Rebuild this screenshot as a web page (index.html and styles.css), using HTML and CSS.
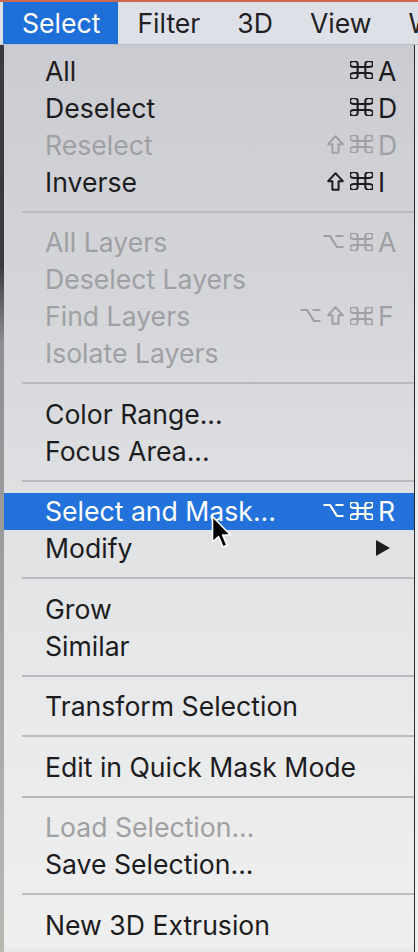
FILE: index.html
```html
<!DOCTYPE html>
<html>
<head>
<meta charset="utf-8">
<link rel="stylesheet" href="styles.css">
</head>
<body>
<svg class="defs" width="0" height="0">
  <symbol id="i-cmd" viewBox="3 3 18 18" preserveAspectRatio="none">
    <path d="M18 3a3 3 0 0 0-3 3v12a3 3 0 0 0 3 3 3 3 0 0 0 3-3 3 3 0 0 0-3-3H6a3 3 0 0 0-3 3 3 3 0 0 0 3 3 3 3 0 0 0 3-3V6a3 3 0 0 0-3-3 3 3 0 0 0-3 3 3 3 0 0 0 3 3h12a3 3 0 0 0 3-3 3 3 0 0 0-3-3z" fill="none" stroke="currentColor" stroke-width="2.1" vector-effect="non-scaling-stroke"/>
  </symbol>
  <symbol id="i-shift" viewBox="0 0 17 19">
    <path d="M8.5 1.2 L15.8 9.2 L11.6 9.2 L11.6 17.8 L5.4 17.8 L5.4 9.2 L1.2 9.2 Z" fill="none" stroke="currentColor" stroke-width="2" stroke-linejoin="round"/>
  </symbol>
  <symbol id="i-opt" viewBox="0 0 21 15">
    <path d="M0.5 2 H7 L14 13 H20.5 M12.5 2 H20.5" fill="none" stroke="currentColor" stroke-width="2.2"/>
  </symbol>
</svg>
<div class="topline"></div>
<div class="menubar">
  <div class="mb-item active">Select</div>
  <div class="mb-item">Filter</div>
  <div class="mb-item">3D</div>
  <div class="mb-item">View</div>
  <div class="mb-item">Window</div>
</div>
<div class="stage">
  <div class="edge-left"></div>
  <div class="menu">
    <div class="row"><span class="label">All</span><span class="mods"><svg class="cmd"><use href="#i-cmd"/></svg></span><span class="key">A</span></div>
    <div class="row"><span class="label">Deselect</span><span class="mods"><svg class="cmd"><use href="#i-cmd"/></svg></span><span class="key">D</span></div>
    <div class="row disabled"><span class="label">Reselect</span><span class="mods"><svg class="shift"><use href="#i-shift"/></svg><svg class="cmd"><use href="#i-cmd"/></svg></span><span class="key">D</span></div>
    <div class="row"><span class="label">Inverse</span><span class="mods"><svg class="shift"><use href="#i-shift"/></svg><svg class="cmd"><use href="#i-cmd"/></svg></span><span class="key">I</span></div>
    <div class="sep"></div>
    <div class="row disabled"><span class="label">All Layers</span><span class="mods"><svg class="opt"><use href="#i-opt"/></svg><svg class="cmd"><use href="#i-cmd"/></svg></span><span class="key">A</span></div>
    <div class="row disabled"><span class="label">Deselect Layers</span></div>
    <div class="row disabled"><span class="label">Find Layers</span><span class="mods"><svg class="opt"><use href="#i-opt"/></svg><svg class="shift"><use href="#i-shift"/></svg><svg class="cmd"><use href="#i-cmd"/></svg></span><span class="key">F</span></div>
    <div class="row disabled"><span class="label">Isolate Layers</span></div>
    <div class="sep"></div>
    <div class="row"><span class="label">Color Range...</span></div>
    <div class="row"><span class="label">Focus Area...</span></div>
    <div class="sep"></div>
    <div class="row hl"><span class="label">Select and Mask...</span><span class="mods"><svg class="opt"><use href="#i-opt"/></svg><svg class="cmd"><use href="#i-cmd"/></svg></span><span class="key">R</span></div>
    <div class="row"><span class="label">Modify</span><svg class="sub" width="14" height="16" viewBox="0 0 14 16"><path d="M0 0 L14 8 L0 16 Z" fill="#1e1e1e"/></svg></div>
    <div class="sep"></div>
    <div class="row"><span class="label">Grow</span></div>
    <div class="row"><span class="label">Similar</span></div>
    <div class="sep"></div>
    <div class="row"><span class="label">Transform Selection</span></div>
    <div class="sep"></div>
    <div class="row"><span class="label">Edit in Quick Mask Mode</span></div>
    <div class="sep"></div>
    <div class="row disabled"><span class="label">Load Selection...</span></div>
    <div class="row"><span class="label">Save Selection...</span></div>
    <div class="sep"></div>
    <div class="row"><span class="label">New 3D Extrusion</span></div>
    <svg class="cursor" width="24" height="36" viewBox="0 0 24 36"><path d="M1.5 1.5 L1.5 27 L7.5 21.5 L12 32 L16 30.2 L11.6 20 L19.5 20 Z" fill="#000" stroke="#fff" stroke-width="1.6" stroke-linejoin="round"/></svg>
  </div>
  <div class="edge-right"></div>
</div>
</body>
</html>
```
FILE: styles.css
```css
html, body {
  margin: 0;
  padding: 0;
}
body {
  width: 418px;
  height: 952px;
  overflow: hidden;
  background: #e9e9e9;
  font-family: Inter, "Noto Sans", sans-serif;
  -webkit-font-smoothing: antialiased;
}
.defs {
  display: block;
  width: 0;
  height: 0;
  overflow: hidden;
}
.topline {
  height: 2px;
  background: #c9694f;
}
.menubar {
  height: 42px;
  display: flex;
  align-items: stretch;
  background: #dee0e8;
  border-bottom: 1px solid #b9bbc2;
  padding-left: 3px;
  overflow: hidden;
  white-space: nowrap;
}
.mb-item {
  display: flex;
  align-items: center;
  padding: 0 18px 0 19px;
  font-size: 26.6px;
  color: #1f2024;
}
.mb-item.active {
  background: #1f6fd8;
  color: #ffffff;
}
.stage {
  display: flex;
  height: 907px;
}
.edge-left {
  width: 4px;
  background: linear-gradient(#3a3a3c 0, #3a3a3c 220px, #8d8f92 300px, #b9b8b3 100%);
}
.edge-right {
  width: 4px;
  background: linear-gradient(#e4e5e8, #f0f0f0);
  border-left: 1px solid #2a2a2c;
  box-sizing: border-box;
}
.menu {
  position: relative;
  flex: 1;
  padding-top: 7px;
  background: linear-gradient(#cbccd1 0, #d3d5d9 250px, #dee0e2 450px, #e8e9ea 650px, #efefef 100%);
  border-radius: 0 0 6px 6px;
  box-sizing: border-box;
  height: 903px;
}
.row {
  display: flex;
  align-items: center;
  height: 37px;
  padding: 0 16px 0 41px;
  font-size: 26.6px;
  color: #1c1c1e;
}
.row.disabled {
  color: #9fa0a3;
}
.row.hl {
  background: #2372dc;
  color: #ffffff;
}
.label {
  flex: 1;
  white-space: nowrap;
}
.mods {
  display: flex;
  align-items: center;
  gap: 6px;
  margin-top: -1px;
}
.cmd {
  display: block;
  width: 23px;
  height: 18px;
}
.opt {
  display: block;
  width: 21px;
  height: 15px;
}
.shift {
  display: block;
  width: 17px;
  height: 19px;
}
.key {
  width: 20px;
  margin-left: 5px;
}
.sub {
  margin-right: 8px;
}
.sep {
  height: 23.5px;
  display: flex;
  align-items: center;
}
.sep::before {
  content: "";
  display: block;
  width: 100%;
  margin-left: 18px;
  height: 2px;
  background: #babbbf;
}
.cursor {
  position: absolute;
  left: 207px;
  top: 470px;
}
```
